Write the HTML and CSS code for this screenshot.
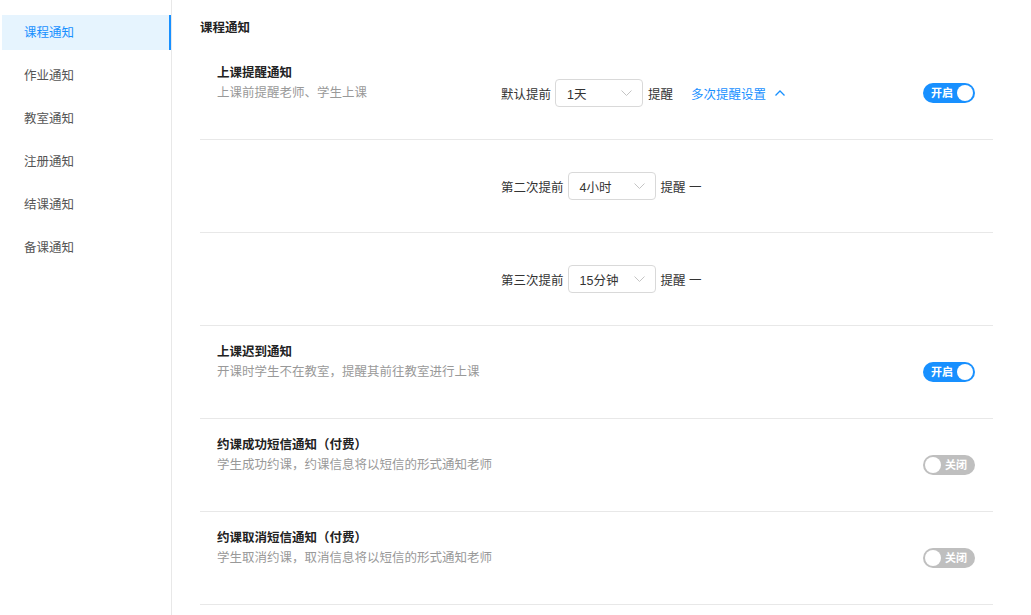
FILE: index.html
```html
<!DOCTYPE html>
<html lang="zh-CN">
<head>
    <meta charset="UTF-8">
    <title>课程通知</title>
    <link rel="stylesheet" href="styles.css">
</head>
<body>
    <div class="layout">
        <div class="sidebar">
            <div class="nav-item active">课程通知</div>
            <div class="nav-item">作业通知</div>
            <div class="nav-item">教室通知</div>
            <div class="nav-item">注册通知</div>
            <div class="nav-item">结课通知</div>
            <div class="nav-item">备课通知</div>
        </div>
        <div class="content">
            <h3 class="page-title">课程通知</h3>

            <div class="row">
                <div class="info">
                    <div class="title">上课提醒通知</div>
                    <div class="desc">上课前提醒老师、学生上课</div>
                </div>
                <div class="controls">
                    <span>默认提前</span>
                    <div class="select">
                        <span>1天</span>
                        <svg width="11" height="6" viewBox="0 0 11 6"><polyline points="0.5,0.5 5.5,5.5 10.5,0.5" fill="none" stroke="#c4c4c4" stroke-width="1"/></svg>
                    </div>
                    <span>提醒</span>
                    <a class="link">多次提醒设置
                        <svg width="10" height="6" viewBox="0 0 10 6"><polyline points="0.5,5.5 5,1 9.5,5.5" fill="none" stroke="#1890ff" stroke-width="1.3"/></svg>
                    </a>
                </div>
                <div class="switch on"><span class="switch-text">开启</span><span class="knob"></span></div>
            </div>

            <div class="row">
                <div class="info"></div>
                <div class="controls">
                    <span>第二次提前</span>
                    <div class="select">
                        <span>4小时</span>
                        <svg width="11" height="6" viewBox="0 0 11 6"><polyline points="0.5,0.5 5.5,5.5 10.5,0.5" fill="none" stroke="#c4c4c4" stroke-width="1"/></svg>
                    </div>
                    <span>提醒 一</span>
                </div>
            </div>

            <div class="row">
                <div class="info"></div>
                <div class="controls">
                    <span>第三次提前</span>
                    <div class="select">
                        <span>15分钟</span>
                        <svg width="11" height="6" viewBox="0 0 11 6"><polyline points="0.5,0.5 5.5,5.5 10.5,0.5" fill="none" stroke="#c4c4c4" stroke-width="1"/></svg>
                    </div>
                    <span>提醒 一</span>
                </div>
            </div>

            <div class="row">
                <div class="info">
                    <div class="title">上课迟到通知</div>
                    <div class="desc">开课时学生不在教室，提醒其前往教室进行上课</div>
                </div>
                <div class="controls"></div>
                <div class="switch on"><span class="switch-text">开启</span><span class="knob"></span></div>
            </div>

            <div class="row">
                <div class="info wide">
                    <div class="title">约课成功短信通知（付费）</div>
                    <div class="desc">学生成功约课，约课信息将以短信的形式通知老师</div>
                </div>
                <div class="controls"></div>
                <div class="switch off"><span class="knob"></span><span class="switch-text">关闭</span></div>
            </div>

            <div class="row">
                <div class="info wide">
                    <div class="title">约课取消短信通知（付费）</div>
                    <div class="desc">学生取消约课，取消信息将以短信的形式通知老师</div>
                </div>
                <div class="controls"></div>
                <div class="switch off"><span class="knob"></span><span class="switch-text">关闭</span></div>
            </div>
        </div>
    </div>
</body>
</html>
```

FILE: styles.css
```css
* {
    margin: 0;
    padding: 0;
    box-sizing: border-box;
}

body {
    background: #fff;
    font-family: "Liberation Sans", "Noto Sans CJK SC", sans-serif;
    font-size: 12.5px;
    color: #333;
}

.layout {
    display: flex;
    height: 615px;
}

.sidebar {
    width: 172px;
    border-right: 1px solid #e8e8e8;
    padding: 15px 0 0 2px;
    flex-shrink: 0;
}

.nav-item {
    height: 35px;
    line-height: 37px;
    padding-left: 22px;
    margin-bottom: 8px;
    color: #555;
}

.nav-item.active {
    background: #e6f4fe;
    color: #1890ff;
    border-right: 2px solid #1890ff;
}

.content {
    flex: 1;
    padding: 19px 38px 0 28px;
}

.page-title {
    font-size: 12.5px;
    font-weight: bold;
    line-height: 19px;
    color: #222;
    margin-bottom: 9px;
}

.row {
    display: flex;
    align-items: center;
    height: 93px;
    border-bottom: 1px solid #e8e8e8;
    padding: 0 18px 0 17px;
}

.info {
    width: 284px;
    align-self: flex-start;
    padding-top: 17px;
    flex-shrink: 0;
}

.title {
    font-weight: bold;
    color: #222;
    line-height: 19px;
}

.desc {
    color: #999;
    line-height: 20px;
}

.controls {
    flex: 1;
    display: flex;
    align-items: center;
    gap: 4px;
    color: #333;
}

.select {
    width: 88px;
    height: 28px;
    border: 1px solid #d9d9d9;
    border-radius: 4px;
    display: flex;
    align-items: center;
    justify-content: space-between;
    padding: 0 10px 0 11px;
    margin-right: 1px;
}

.link {
    color: #1890ff;
    margin-left: 14px;
    display: flex;
    align-items: center;
    gap: 9px;
}

.switch {
    width: 52px;
    height: 20px;
    border-radius: 10px;
    display: flex;
    align-items: center;
    justify-content: space-between;
    padding: 0 2px 0 2px;
    color: #fff;
    font-size: 11px;
    font-weight: bold;
}

.switch.on {
    background: #1890ff;
    padding-left: 8px;
}

.switch.off {
    background: #bfbfbf;
    padding-right: 8px;
}

.knob {
    width: 16px;
    height: 16px;
    border-radius: 50%;
    background: #fff;
}

.switch-text {
    line-height: 20px;
}
```
